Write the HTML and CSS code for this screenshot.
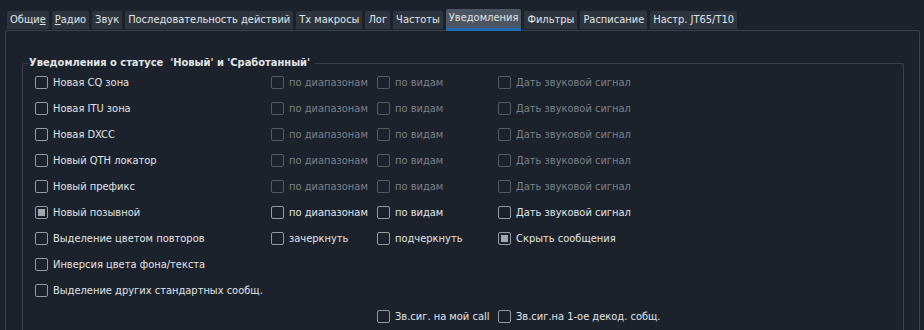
FILE: index.html
```html
<!DOCTYPE html>
<html lang="ru">
<head>
<meta charset="utf-8">
<link rel="stylesheet" href="styles.css">
</head>
<body>
<div class="tabs">
  <div class="tab">Общи<u>е</u></div>
  <div class="tab"><u>Р</u>адио</div>
  <div class="tab">Звук</div>
  <div class="tab">Последовательность действий</div>
  <div class="tab">Tx макросы</div>
  <div class="tab">Лог</div>
  <div class="tab">Частоты</div>
  <div class="tab active">Уведомления</div>
  <div class="tab">Фильтры</div>
  <div class="tab">Расписание</div>
  <div class="tab">Настр. JT65/T10</div>
</div>
<div class="panel">
  <div class="group">
    <div class="legend">Уведомления о статусе&nbsp; 'Новый' и 'Сработанный'</div>
    <div class="grid">
      <label class="cb"><span class="box"></span>Новая CQ зона</label>
      <label class="cb dis"><span class="box"></span>по диапазонам</label>
      <label class="cb dis"><span class="box"></span>по видам</label>
      <label class="cb dis"><span class="box"></span>Дать звуковой сигнал</label>

      <label class="cb"><span class="box"></span>Новая ITU зона</label>
      <label class="cb dis"><span class="box"></span>по диапазонам</label>
      <label class="cb dis"><span class="box"></span>по видам</label>
      <label class="cb dis"><span class="box"></span>Дать звуковой сигнал</label>

      <label class="cb"><span class="box"></span>Новая DXCC</label>
      <label class="cb dis"><span class="box"></span>по диапазонам</label>
      <label class="cb dis"><span class="box"></span>по видам</label>
      <label class="cb dis"><span class="box"></span>Дать звуковой сигнал</label>

      <label class="cb"><span class="box"></span>Новый QTH локатор</label>
      <label class="cb dis"><span class="box"></span>по диапазонам</label>
      <label class="cb dis"><span class="box"></span>по видам</label>
      <label class="cb dis"><span class="box"></span>Дать звуковой сигнал</label>

      <label class="cb"><span class="box"></span>Новый префикс</label>
      <label class="cb dis"><span class="box"></span>по диапазонам</label>
      <label class="cb dis"><span class="box"></span>по видам</label>
      <label class="cb dis"><span class="box"></span>Дать звуковой сигнал</label>

      <label class="cb"><span class="box checked"></span>Новый позывной</label>
      <label class="cb"><span class="box"></span>по диапазонам</label>
      <label class="cb"><span class="box"></span>по видам</label>
      <label class="cb"><span class="box"></span>Дать звуковой сигнал</label>

      <label class="cb"><span class="box"></span>Выделение цветом повторов</label>
      <label class="cb"><span class="box"></span>зачеркнуть</label>
      <label class="cb"><span class="box"></span>подчеркнуть</label>
      <label class="cb"><span class="box checked"></span>Скрыть сообщения</label>

      <label class="cb wide"><span class="box"></span>Инверсия цвета фона/текста</label>

      <label class="cb wide"><span class="box"></span>Выделение других стандартных сообщ.</label>

      <span class="empty"></span>
      <span class="empty"></span>
      <label class="cb"><span class="box"></span>Зв.сиг. на мой call</label>
      <label class="cb"><span class="box"></span>Зв.сиг.на 1-ое декод. собщ.</label>
    </div>
  </div>
</div>
</body>
</html>
```
FILE: styles.css
```css
html, body {
  margin: 0;
  padding: 0;
  background: #1b222b;
}
body {
  font-family: "DejaVu Sans Condensed", "DejaVu Sans", Tahoma, sans-serif;
  font-size: 11px;
  color: #e1e3e5;
  padding: 9px 5px 0 5px;
  height: 330px;
  box-sizing: border-box;
  overflow: hidden;
}
.tabs {
  display: flex;
  gap: 3px;
  padding-left: 2px;
  height: 20px;
  align-items: flex-end;
}
.tab {
  background: #2c343e;
  color: #e1e3e5;
  height: 18px;
  line-height: 18px;
  padding: 0 3px;
  border-radius: 2px 2px 0 0;
  white-space: nowrap;
}
.tab.active {
  background: #4b5662;
  height: 19px;
  line-height: 18px;
  border-bottom: 3px solid #1f6bb3;
  margin-bottom: -2px;
}
.panel {
  margin-top: 1px;
  border: 1px solid #38414c;
  border-bottom: none;
  border-radius: 3px 3px 0 0;
  height: 300px;
  width: 915px;
  padding: 32px 0 0 16px;
  box-sizing: border-box;
  overflow: hidden;
}
.group {
  position: relative;
  border: 1px solid #38414c;
  border-bottom: none;
  border-radius: 3px 3px 0 0;
  width: 882px;
  height: 280px;
  box-sizing: border-box;
  padding: 5px 0 0 12px;
}
.legend {
  position: absolute;
  left: 5px;
  top: -8px;
  background: #1b222b;
  font-weight: bold;
  padding: 0 5px 0 1px;
  line-height: 14px;
  white-space: pre;
}
.grid {
  display: grid;
  grid-template-columns: 236px 106px 121px 200px;
  grid-auto-rows: 26px;
}
.cb {
  display: flex;
  align-items: center;
  gap: 4px;
  white-space: nowrap;
  height: 26px;
}
.cb.wide { grid-column: 1 / -1; }
.box {
  width: 11px;
  height: 11px;
  border: 1px solid #959ba2;
  border-radius: 2px;
  flex: none;
  position: relative;
  margin-right: 1px;
}
.box.checked::after {
  content: "";
  position: absolute;
  left: 2px;
  top: 2px;
  width: 7px;
  height: 7px;
  background: #a3a6aa;
}
.dis { color: #7b8087; }
.dis .box { border-color: #545b63; }
```
